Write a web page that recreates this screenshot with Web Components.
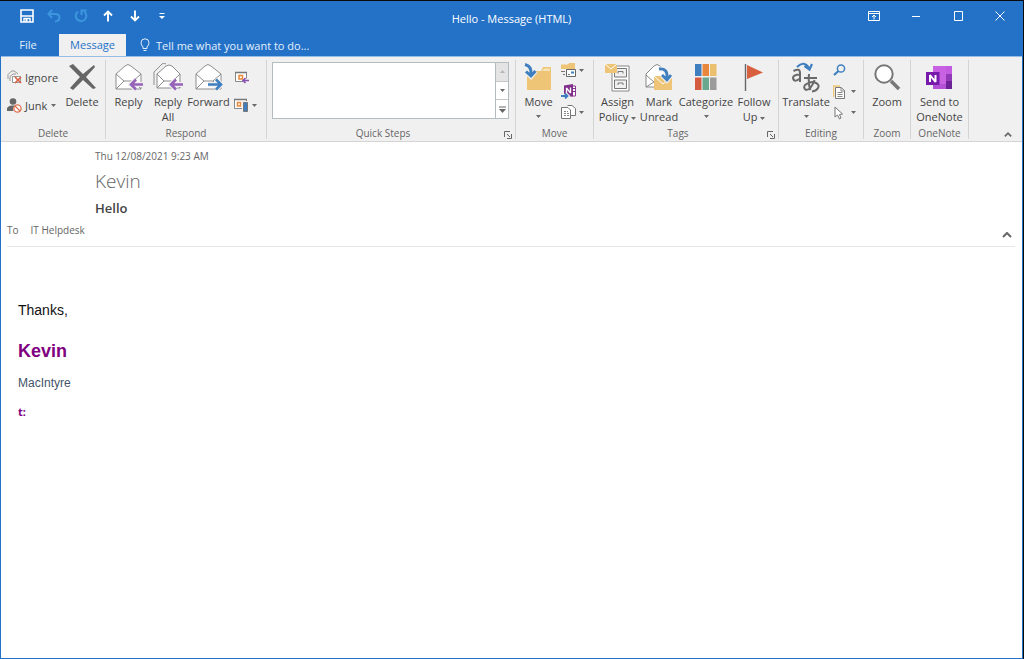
<!DOCTYPE html>
<html lang="en">
<head>
<meta charset="utf-8">
<meta name="viewport" content="width=device-width, initial-scale=1">
<title>Hello - Message (HTML)</title>
<style>
  html, body { height: 100%; margin: 0; }
  body { background: #0a0a0a; font-family: "Open Sans", "Noto Sans", sans-serif; font-size: 11px; color: #444; }
</style>
</head>
<body>
<mail-window>
  <title-bar slot="title">Hello - Message (HTML)</title-bar>
  <ribbon-tabs slot="tabs"></ribbon-tabs>
  <ribbon-bar slot="ribbon"></ribbon-bar>
  <message-header slot="header">
    <time slot="date" datetime="2021-08-12T09:23">Thu 12/08/2021 9:23 AM</time>
    <span slot="sender">Kevin</span>
    <span slot="subject">Hello</span>
    <span slot="to">IT Helpdesk</span>
  </message-header>
  <message-body></message-body>
</mail-window>

<script>
const define = (name, html, setup) => {
  const template = document.createElement('template');
  template.innerHTML = html;
  customElements.define(name, class extends HTMLElement {
    constructor() {
      super();
      this.attachShadow({ mode: 'open' }).append(template.content.cloneNode(true));
    }
    connectedCallback() { if (setup) setup(this, this.shadowRoot); }
  });
};

/* Icons: [width, height, markup] */
const envelope = '<path d="M1 11L10 3Q13 0 16 3L26 11V26H1Z" fill="#fff" stroke="#8c8c8c"/><path d="M1 11L9 18H18L26 11M1 26L9 18M26 26L18 18" fill="none" stroke="#8c8c8c"/>';
const ICONS = {
  save: [14, 14, '<path d="M1 1H13V13H1Z" fill="none" stroke="#fff" stroke-width="1.6"/><path d="M1 7H13M4 13V9.5H10V13" fill="none" stroke="#fff" stroke-width="1.4"/><path d="M5.5 10h2v3h-2z" fill="#fff"/>'],
  undo: [14, 14, '<path d="M5 1L1.5 5L5 9M2 5H9Q12.5 5.500 12.500 8.500Q12.500 12 8 12.500" fill="none" stroke="#3d95de" stroke-width="2"/>'],
  redo: [14, 14, '<path d="M4 2.500A5.300 5.300 0 1 0 10.500 2.800M7.500 6V1.500H12.500" fill="none" stroke="#3d95de" stroke-width="2"/>'],
  up: [10, 12, '<path d="M5 11.500V2M1 5.500L5 1.500L9 5.500" fill="none" stroke="#fff" stroke-width="1.900"/>'],
  down: [10, 12, '<path d="M5 .5V10M1 6.500L5 10.500L9 6.500" fill="none" stroke="#fff" stroke-width="1.900"/>'],
  more: [6, 8, '<path d="M.5 1.500H5.500" stroke="#fff"/><path d="M0 4H6L3 7Z" fill="#fff"/>'],
  ribbonOptions: [12, 11, '<path d="M.5 .5H11.500V9.500H.5ZM.5 2.500H11.500M6 8.500V4.500M4 6L6 4L8 6" fill="none" stroke="#fff"/>'],
  minimize: [10, 10, '<path d="M1 5.500H9" stroke="#fff"/>'],
  maximize: [10, 10, '<path d="M1.500 .5H9.500V9.500H1.500Z" fill="none" stroke="#fff"/>'],
  close: [10, 10, '<path d="M.5 .5L9.500 9.500M9.500 .5L.5 9.500" stroke="#fff"/>'],
  bulb: [10, 14, '<path d="M3 10.500V9Q1 7 1 4.800A4 4 0 0 1 9 4.800Q9 7 7 9V10.500ZM3.500 12.500H6.500" fill="none" stroke="#e3effb"/>'],
  arrow: [5, 3, '<path d="M0 0H5L2.500 3Z" fill="#6a6a6a"/>'],
  arrowUp: [5, 3, '<path d="M0 3H5L2.500 0Z" fill="#b5b5b5"/>'],
  gallery: [7, 7, '<path d="M0 1H7" stroke="#666"/><path d="M0 3H7L3.500 7Z" fill="#666"/>'],
  launcher: [8, 8, '<path d="M.5 6V.5H6M3 3L6 6M7.500 3V7.500H3" fill="none" stroke="#666"/>'],
  collapse: [8, 5, '<path d="M.8 4.300L4 1.200L7.200 4.300" fill="none" stroke="#666" stroke-width="1.700"/>'],
  fold: [10, 6, '<path d="M1 5L5 1L9 5" fill="none" stroke="#666" stroke-width="2"/>'],
  ignore: [15, 14, '<path d="M1 9V4.500L4 1.500Q6 0 8 1.500L11 4M3 11V6.500L6 4H9" fill="none" stroke="#999"/><path d="M5.500 7V12.500H13.500V6.500H5.500Z" fill="#fff" stroke="#999"/><path d="M8 7L14 13M14 7L8 13" stroke="#d9603f" stroke-width="1.700"/>'],
  junk: [15, 15, '<circle cx="6" cy="3.500" r="3.300" fill="#666"/><path d="M0 13V10Q1 8 4 7.500H8Q5 10 6.500 13Z" fill="#666"/><circle cx="10.500" cy="10.500" r="3.600" fill="#fff" stroke="#e0704f" stroke-width="1.300"/><path d="M8 8L13 13" stroke="#e0704f" stroke-width="1.300"/>'],
  delete: [27, 26, '<path d="M0 2L4 0L14 10L25 1L26 3L17 13L27 24L24 25L14 16L4 26L1 24L11 13Z" fill="#666"/>'],
  reply: [28, 28, envelope + '<path d="M28 21.500H17M21 16.500L16 21.500L21 26.500" fill="none" stroke="#f0f0f0" stroke-width="5"/><path d="M28 21.500H16M21 16.500L16 21.500L21 26.500" fill="none" stroke="#9563b8" stroke-width="2.600"/>'],
  replyAll: [30, 28, '<path d="M1 22V9L9 1Q11 -1 13 1" fill="none" stroke="#8c8c8c"/><g transform="translate(3 1)"><path d="M1 10L10 2Q13 0 16 2L24 10V24H1Z" fill="#fff" stroke="#8c8c8c"/><path d="M1 10L8 17H17L24 10M1 24L8 17M24 24L17 17" fill="none" stroke="#8c8c8c"/></g><path d="M30 21.500H19M23 16.500L18 21.500L23 26.500" fill="none" stroke="#f0f0f0" stroke-width="5"/><path d="M30 21.500H18M23 16.500L18 21.500L23 26.500" fill="none" stroke="#9563b8" stroke-width="2.600"/>'],
  forward: [28, 28, envelope + '<path d="M13 21.500H26M21 16.500L26 21.500L21 26.500" fill="none" stroke="#f0f0f0" stroke-width="5"/><path d="M13 21.500H26M21 16.500L26 21.500L21 26.500" fill="none" stroke="#3f7fbf" stroke-width="2.600"/>'],
  meeting: [15, 13, '<path d="M1.500 1.500H12.500V10.500H1.500Z" fill="#fff" stroke="#888"/><path d="M1 1.500H13" stroke="#777" stroke-width="1.500"/><path d="M5 4.500H8.500V8H5Z" fill="none" stroke="#e8883a" stroke-width="1.500"/><path d="M15 9.500H9" stroke="#f0f0f0" stroke-width="4"/><path d="M15 9.500H9M11.500 7L9 9.500L11.500 12" fill="none" stroke="#8650b0" stroke-width="1.600"/>'],
  respondMore: [15, 15, '<path d="M.5 1.500H12.500V10.500H.5Z" fill="#fff" stroke="#888"/><path d="M0 1.500H13" stroke="#777" stroke-width="1.500"/><path d="M3.500 4.500H6.500V8H3.500Z" fill="none" stroke="#e8883a" stroke-width="1.500"/><path d="M8 3H15V15H8Z" fill="#f0f0f0"/><path d="M9.500 4.500H13.500V13.500H9.500Z" fill="#3f7fbf" stroke="#777"/>'],
  move: [29, 28, '<path d="M3 8H17L19 4H27V27H3Z" fill="#eec577"/><path d="M18 8L20 5.500H26V8Z" fill="#f7e3b8"/><path d="M1 1Q8 3 7 12M2 9L7 13.500L11.500 8" fill="none" stroke="#f0f0f0" stroke-width="5"/><path d="M1 1.500Q8 3 7 12M2 8.500L7 13L11.500 8" fill="none" stroke="#3f7fbf" stroke-width="3"/>'],
  rules: [16, 15, '<path d="M0 1.500H7L8 0H14V6H0Z" fill="#eec577"/><path d="M0 8.500H4M2 11.500H4" stroke="#777"/><path d="M5.500 6.500H14.500V13.500H5.500Z" fill="#fff" stroke="#666"/><path d="M7 11.500H9" stroke="#777"/><path d="M10 8.500H13V10.500H10Z" fill="#3f7fbf"/>'],
  oneNote: [16, 15, '<path d="M9 2H14.500V12H8" fill="#fff" stroke="#8a3a92"/><path d="M3 1.500L12 0V12.500L3 11Z" fill="#80308a"/><path d="M5.500 9V4L9.500 9V3.500" fill="none" stroke="#fff" stroke-width="1.300" stroke-linejoin="bevel"/><path d="M12 4.500H14.500M12 7.500H14.500" stroke="#80308a"/><path d="M0 12H6M4 9.500L6.500 12L4 14.500" fill="none" stroke="#f0f0f0" stroke-width="4"/><path d="M0 12H6M4 9.500L6.500 12L4 14.500" fill="none" stroke="#3f7fbf" stroke-width="1.800"/>'],
  actions: [16, 15, '<path d="M6.500 .5H11L14.500 3.500V10.500H8" fill="#fff" stroke="#777"/><path d="M.5 2.500H7L9.500 5V13.500H.5Z" fill="#fff" stroke="#777"/><path d="M3 6.500H7M3 8.500H8M3 10.500H8" stroke="#888" stroke-dasharray="2 1"/>'],
  policy: [26, 29, '<path d="M7 3H24V28H7Z" fill="#fff" stroke="#888"/><path d="M9.500 5.500H21.500V14H9.500ZM9.500 17H21.500V25.500H9.500Z" fill="#f0f0f0" stroke="#777"/><path d="M13 10.500V8.500H18V10.500M13 22V20H18V22" fill="none" stroke="#777"/><path d="M0 1H12V10H0Z" fill="#eec577"/><path d="M0 1L6 6L12 1" fill="none" stroke="#fff"/>'],
  unread: [28, 28, '<path d="M1 11L9 3Q12 0 15 3L22 10V24H1Z" fill="#fff" stroke="#888"/><path d="M1 12L9 19L1 24M9 19H13" fill="none" stroke="#888"/><path d="M9 13H27V27H9Z" fill="#eec577"/><path d="M9 13L18 21L27 13" fill="none" stroke="#fff"/><path d="M14 6Q23 5 22 15M17 12L22 17L26 12" fill="none" stroke="#f0f0f0" stroke-width="5"/><path d="M14 6Q23 5 22 15M17 12L22 17L26 12" fill="none" stroke="#3f7fbf" stroke-width="2.800"/>'],
  categorize: [22, 26, '<path d="M0 0H6.500V12H0Z" fill="#3f7fbf"/><path d="M7.500 0H14V12H7.500Z" fill="#e9883c"/><path d="M15 0H21.500V12H15Z" fill="#eabf6d"/><path d="M0 13.500H6.500V26H0Z" fill="#d65a40"/><path d="M7.500 13.500H14V26H7.500Z" fill="#69a78e"/><path d="M15 13.500H21.500V26H15Z" fill="#9b9b9b"/>'],
  flag: [20, 27, '<path d="M1.500 0V27" stroke="#666" stroke-width="1.400"/><path d="M3 1L19 8.500L3 15Z" fill="#d9603f"/>'],
  translate: [28, 31, '<g fill="none" stroke="#6a6a6a" stroke-width="2"><path d="M1.500 9Q8 5.500 8 11V20M8 12.500Q1 12.500 1 16Q2 21 8 16.500"/><path d="M12 16H25M17 12Q16 22 18.500 28M22.500 18Q19 28 14 28Q11 26 13 23Q18 19 23 20.500Q28 22.500 26 26Q24.500 29 20 29.500"/></g><path d="M5 5Q12 -2 17 6M12.500 4L17.500 7.500L20 2" fill="none" stroke="#3f7fbf" stroke-width="2.200"/>'],
  find: [13, 13, '<circle cx="8" cy="4.500" r="3.600" fill="none" stroke="#3f7fbf" stroke-width="1.500"/><path d="M5.500 7L1 11" stroke="#3f7fbf" stroke-width="2.200"/>'],
  related: [13, 14, '<path d="M.5 12V1H7" fill="none" stroke="#eec577" stroke-width="1.500"/><path d="M2.500 2.500H8L11.500 5.500V13.500H2.500Z" fill="#fff" stroke="#777"/><path d="M8 2.500V6H11.500M4.500 7.500H9.500M4.500 9.500H9.500M4.500 11.500H9.500" fill="none" stroke="#888"/>'],
  select: [10, 14, '<path d="M2 1V11L4.500 9L6.500 13L8 12L6.500 8.500L9.500 8Z" fill="#fff" stroke="#777"/>'],
  zoom: [27, 27, '<path d="M17 17L25 25" stroke="#777" stroke-width="3.500"/><circle cx="10" cy="10" r="8.700" fill="#fff" stroke="#777" stroke-width="2"/>'],
  sendOneNote: [27, 23, '<path d="M7 0H26V23H7Z" fill="#c962e2"/><path d="M20 0H26V8H20Z" fill="#c35be0"/><path d="M20 8H26V15H20Z" fill="#9139b7"/><path d="M20 15H26V23H20Z" fill="#6d2196"/><path d="M7 18H20V23H7Z" fill="#b250d6"/><path d="M0 6H13.500V19H0Z" fill="#7719aa"/><path d="M4 16V9L9.500 16V9" fill="none" stroke="#fff" stroke-width="2" stroke-linejoin="bevel"/>']
};
define('ui-icon', '<style>:host{display:block;flex:none}svg{display:block}</style><svg aria-hidden="true"></svg>', (host, root) => {
  const [w, h, art] = ICONS[host.getAttribute('name')];
  const svg = root.querySelector('svg');
  svg.setAttribute('viewBox', `0 0 ${w} ${h}`);
  svg.setAttribute('width', w);
  svg.setAttribute('height', h);
  svg.innerHTML = art;
});

const reset = 'button{font:inherit;color:inherit;background:none;border:0;padding:0;margin:0;white-space:nowrap}';

define('mail-window', `<style>
  :host{display:flex;box-sizing:border-box;min-height:100vh;padding:1px 1px 0 0}
  main{flex:1;min-width:0;box-sizing:border-box;display:flex;flex-direction:column;background:#fff;border:1px solid #2472c8;border-top:0}
</style><main><slot name="title"></slot><slot name="tabs"></slot><slot name="ribbon"></slot><slot name="header"></slot><slot></slot></main>`);

define('title-bar', `<style>${reset}
  :host{display:grid;grid-template-columns:1fr auto 1fr;background:#2472c8;color:#fff;height:32px}
  div{display:flex;height:30px}
  h1{margin:0;font:inherit;line-height:36px}
  .quick{padding-left:12px}
  .quick button{width:27px}
  .window{justify-content:flex-end;padding-right:1px}
  .window button{width:42px}
  button{display:flex;align-items:center;justify-content:center}
</style>
<div class="quick">
  <button aria-label="Save"><ui-icon name="save"></ui-icon></button>
  <button aria-label="Undo"><ui-icon name="undo"></ui-icon></button>
  <button aria-label="Redo"><ui-icon name="redo"></ui-icon></button>
  <button aria-label="Previous item"><ui-icon name="up"></ui-icon></button>
  <button aria-label="Next item"><ui-icon name="down"></ui-icon></button>
  <button aria-label="Customize toolbar"><ui-icon name="more"></ui-icon></button>
</div>
<h1><slot></slot></h1>
<div class="window">
  <button aria-label="Ribbon display options"><ui-icon name="ribbonOptions"></ui-icon></button>
  <button aria-label="Minimize"><ui-icon name="minimize"></ui-icon></button>
  <button aria-label="Maximize"><ui-icon name="maximize"></ui-icon></button>
  <button aria-label="Close"><ui-icon name="close"></ui-icon></button>
</div>`);

define('ribbon-tabs', `<style>${reset}
  :host{display:flex;background:#2472c8;color:#e3effb;height:22px;padding-top:1px}
  button{line-height:22px}
  .file{width:54px;margin-right:4px}
  .on{width:67px;background:#f0f0f0;color:#2472c8}
  label{display:flex;align-items:center;flex:1;gap:6px;padding-left:14px}
  input{flex:1;min-width:0;font:inherit;color:inherit;background:none;border:0;padding:0;outline:0}
  input::placeholder{color:inherit;opacity:1}
</style>
<button class="file">File</button><button class="on" aria-current="true">Message</button>
<label><ui-icon name="bulb"></ui-icon><input type="text" aria-label="Tell me" placeholder="Tell me what you want to do..."></label>`);

define('ribbon-group', `<style>${reset}
  :host{display:flex;flex-direction:column;flex:none;box-sizing:border-box;width:var(--w);height:79px;border-right:1px solid #d4d4d4;position:relative}
  .tools{flex:1;display:flex;align-items:flex-start;min-height:0}
  h2{margin:0;font-size:10px;font-weight:400;line-height:12px;text-align:center;color:#666}
  :host([launcher]) h2{padding-right:16px}
  .launch{display:none;position:absolute;right:3px;bottom:0}
  :host([launcher]) .launch{display:block}
</style><div class="tools"><slot></slot></div><h2></h2><button class="launch"><ui-icon name="launcher"></ui-icon></button>`, (host, root) => {
  root.querySelector('h2').textContent = host.getAttribute('label');
  root.querySelector('.launch').setAttribute('aria-label', host.getAttribute('label') + ' options');
});

define('big-button', `<style>${reset}
  :host{display:block;flex:none;width:var(--w)}
  button{display:flex;flex-direction:column;align-items:center;width:100%}
  .art{display:flex;align-items:center;height:34px}
  .text{display:block;line-height:15px}
  .text ui-icon,.drop{display:none}
  :host([menu=inline]) .text ui-icon{display:inline-block;margin-left:3px;vertical-align:middle}
  :host([menu=below]) .drop{display:flex;align-items:center;height:15px}
</style><button><span class="art"></span><span class="text"><slot></slot><ui-icon name="arrow"></ui-icon></span><span class="drop"><ui-icon name="arrow"></ui-icon></span></button>`, (host, root) => {
  root.querySelector('.art').innerHTML = `<ui-icon name="${host.getAttribute('icon')}"></ui-icon>`;
});

define('small-button', `<style>${reset}
  :host{display:block}
  button{display:flex;align-items:center;gap:2px;height:var(--row,21px)}
  .art{display:flex;width:16px}
  .drop{display:none;margin-left:2px}
  :host([menu]) .drop{display:block}
  :host([title]) .drop{margin-left:0}
</style><button><span class="art"></span><slot></slot><ui-icon class="drop" name="arrow"></ui-icon></button>`, (host, root) => {
  root.querySelector('.art').innerHTML = `<ui-icon name="${host.getAttribute('icon')}"></ui-icon>`;
  if (host.title) root.querySelector('button').setAttribute('aria-label', host.title);
});

define('quick-steps', `<style>${reset}
  :host{display:flex;flex:1;margin:2px 6px 0 5px;height:57px;box-sizing:border-box;border:1px solid #b5bcc0;background:#fff}
  .list{flex:1}
  .scroll{display:flex;flex-direction:column;width:12px;border-left:1px solid #b5bcc0}
  button{flex:1;display:flex;align-items:center;justify-content:center}
  button+button{border-top:1px solid #c6c6c6}
  button:disabled{background:#e4e4e4}
</style><div class="list" role="listbox" aria-label="Quick Steps"></div>
<div class="scroll"><button disabled aria-label="Scroll up"><ui-icon name="arrowUp"></ui-icon></button><button aria-label="Scroll down"><ui-icon name="arrow"></ui-icon></button><button aria-label="More"><ui-icon name="gallery"></ui-icon></button></div>`);

define('ribbon-bar', `<style>${reset}
  :host{display:flex;height:81px;padding-top:3px;background:#f0f0f0;border-top:1px solid #94bce6;border-bottom:1px solid #d4d4d4}
  .stack{display:flex;flex-direction:column}
  .two{--row:28px;padding-top:3px}
  .end{margin-left:auto;align-self:flex-end;padding:0 10px 4px}
</style>
<ribbon-group label="Delete" style="--w:105px">
  <div class="stack two" style="padding-left:6px;width:56px"><small-button icon="ignore">Ignore</small-button><small-button icon="junk" menu>Junk</small-button></div>
  <big-button icon="delete" style="--w:38px">Delete</big-button>
</ribbon-group>
<ribbon-group label="Respond" style="--w:161px">
  <big-button icon="reply" style="--w:45px">Reply</big-button>
  <big-button icon="replyAll" style="--w:34px">Reply<br>All</big-button>
  <big-button icon="forward" style="--w:47px">Forward</big-button>
  <div class="stack two" style="padding-left:2px"><small-button icon="meeting" title="Meeting"></small-button><small-button icon="respondMore" title="More" menu></small-button></div>
</ribbon-group>
<ribbon-group label="Quick Steps" launcher style="--w:249px"><quick-steps></quick-steps></ribbon-group>
<ribbon-group label="Move" style="--w:78px">
  <big-button icon="move" menu="below" style="--w:45px">Move</big-button>
  <div class="stack"><small-button icon="rules" title="Rules" menu></small-button><small-button icon="oneNote" title="OneNote"></small-button><small-button icon="actions" title="Actions" menu></small-button></div>
</ribbon-group>
<ribbon-group label="Tags" launcher style="--w:185px">
  <big-button icon="policy" menu="inline" style="--w:47px">Assign<br>Policy</big-button>
  <big-button icon="unread" style="--w:36px">Mark<br>Unread</big-button>
  <big-button icon="categorize" menu="below" style="--w:58px">Categorize</big-button>
  <big-button icon="flag" menu="inline" style="--w:38px">Follow<br>Up</big-button>
</ribbon-group>
<ribbon-group label="Editing" style="--w:85px">
  <big-button icon="translate" menu="below" style="--w:54px">Translate</big-button>
  <div class="stack"><small-button icon="find" title="Find"></small-button><small-button icon="related" title="Related" menu></small-button><small-button icon="select" title="Select" menu></small-button></div>
</ribbon-group>
<ribbon-group label="Zoom" style="--w:47px"><big-button icon="zoom" style="--w:46px">Zoom</big-button></ribbon-group>
<ribbon-group label="OneNote" style="--w:58px"><big-button icon="sendOneNote" style="--w:57px">Send to<br>OneNote</big-button></ribbon-group>
<button class="end" aria-label="Collapse ribbon"><ui-icon name="collapse"></ui-icon></button>`);

define('message-header', `<style>${reset}
  :host{display:block;margin:0 7px 0 6px;border-bottom:1px solid #e6e6e6;color:#666;font-size:10px}
  .top{padding:7px 0 1px 88px}
  p{margin:0}
  .date{line-height:14px}
  .sender{font-size:19px;font-weight:300;line-height:36px}
  .subject{font-size:13px;font-weight:600;line-height:18px;color:#444}
  .to{display:flex;align-items:center;gap:12px;line-height:24px;padding-bottom:4px}
  button{margin:10px 3px 0 auto}
</style>
<div class="top"><p class="date"><slot name="date"></slot></p><p class="sender"><slot name="sender"></slot></p><p class="subject"><slot name="subject"></slot></p></div>
<div class="to"><span>To</span><slot name="to"></slot><button aria-label="Collapse header"><ui-icon name="fold"></ui-icon></button></div>`);

define('message-body', `<style>
  :host{display:block;flex:1;padding:53px 17px 0;font-family:"Liberation Sans",Arial,sans-serif}
  p{margin:0}
  .thanks{font-size:14px;line-height:20px;color:#111}
  .name{font-size:18px;font-weight:700;line-height:24px;margin-top:19px;color:#800080}
  .surname{font-size:12px;line-height:16px;margin-top:12px;color:#44546a}
  .phone{font-family:"Noto Sans",sans-serif;font-size:11px;font-weight:700;line-height:16px;margin-top:13px;color:#800080}
</style><p class="thanks">Thanks,</p><p class="name">Kevin</p><p class="surname">MacIntyre</p><p class="phone">t:</p>`);
</script>
</body>
</html>
